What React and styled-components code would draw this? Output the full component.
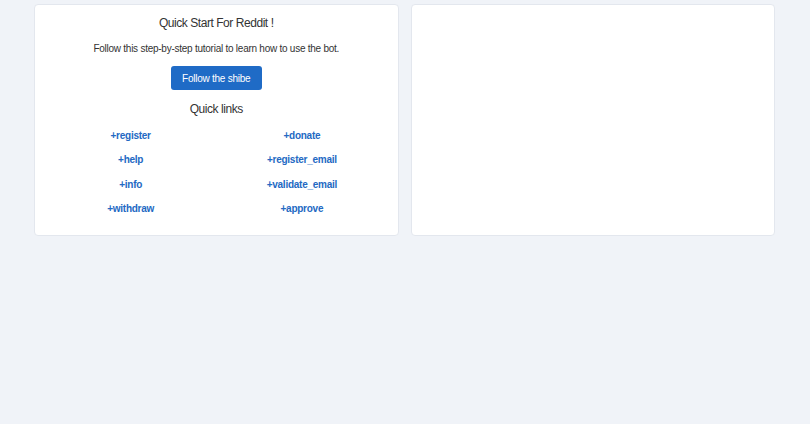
import React from 'react'
import styled, { createGlobalStyle } from 'styled-components'

const GlobalStyle = createGlobalStyle`
  html, body {
    margin: 0;
    padding: 0;
    background: #f0f3f8;
    font-family: "Liberation Sans", Arial, sans-serif;
  }
`

const Page = styled.div`
  display: grid;
  grid-template-columns: 1fr 1fr;
  gap: 12px;
  padding: 4px 35px 0 34px;
`

const Card = styled.div`
  background: #fff;
  border: 1px solid #e3e7ee;
  border-radius: 4px;
  height: 232px;
  box-sizing: border-box;
  padding: 11px 10px 10px;
  text-align: center;
  color: #333;
`

const Title = styled.h3`
  margin: 0;
  font-size: 12px;
  font-weight: 400;
  line-height: 14px;
  letter-spacing: -0.45px;
`

const Lead = styled.p`
  margin: 13px 0 0;
  font-size: 10px;
  line-height: 12px;
  letter-spacing: -0.25px;
`

const Button = styled.button`
  display: block;
  margin: 11px auto 0;
  background: #1f6bc6;
  color: #fff;
  border: none;
  border-radius: 3px;
  height: 24px;
  padding: 0 11.5px;
  font-family: inherit;
  font-size: 10px;
  letter-spacing: -0.25px;
  cursor: pointer;
`

const Subtitle = styled.h4`
  margin: 12px 0 0;
  font-size: 12px;
  font-weight: 400;
  line-height: 14px;
  letter-spacing: -0.45px;
`

const Links = styled.div`
  display: grid;
  grid-template-columns: 1fr 1fr;
  row-gap: 12.4px;
  margin-top: 14px;
`

const QuickLink = styled.a`
  color: #2369c3;
  font-weight: 700;
  font-size: 10px;
  line-height: 12px;
  letter-spacing: -0.25px;
  text-decoration: none;
`

const left = ['+register', '+help', '+info', '+withdraw']
const right = ['+donate', '+register_email', '+validate_email', '+approve']

export default function App() {
  const links = left.flatMap((l, i) => [l, right[i]])
  return (
    <>
      <GlobalStyle />
      <Page>
        <Card>
          <Title>Quick Start For Reddit !</Title>
          <Lead>Follow this step-by-step tutorial to learn how to use the bot.</Lead>
          <Button>Follow the shibe</Button>
          <Subtitle>Quick links</Subtitle>
          <Links>
            {links.map((l) => (
              <QuickLink href="#" key={l}>{l}</QuickLink>
            ))}
          </Links>
        </Card>
        <Card />
      </Page>
    </>
  )
}
